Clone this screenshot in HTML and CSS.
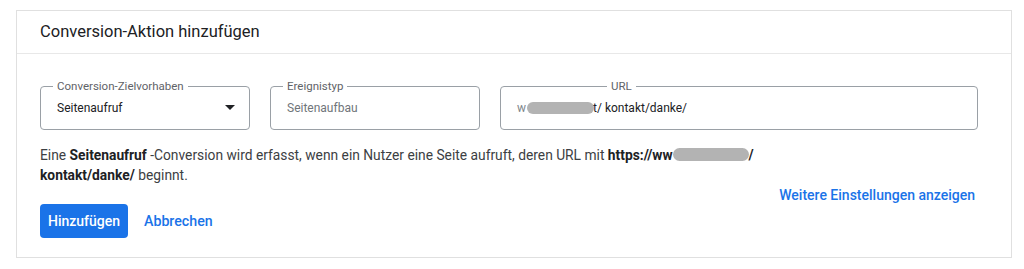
FILE: index.html
```html
<!DOCTYPE html>
<html lang="de">
<head>
<meta charset="utf-8">
<title>Conversion-Aktion hinzufügen</title>
<link rel="stylesheet" href="styles.css">
</head>
<body>
<div class="page">
  <section class="card">
    <header class="card-header">Conversion-Aktion hinzufügen</header>
    <div class="card-body">
      <div class="fields">
        <fieldset class="field field-select">
          <legend class="field-label">Conversion-Zielvorhaben</legend>
          <div class="field-value">
            <span>Seitenaufruf</span>
            <svg class="arrow" width="10" height="5" viewBox="0 0 10 5"><path d="M0 0h10L5 5z" fill="#202124"/></svg>
          </div>
        </fieldset>
        <fieldset class="field field-readonly">
          <legend class="field-label">Ereignistyp</legend>
          <div class="field-value muted">Seitenaufbau</div>
        </fieldset>
        <fieldset class="field field-url">
          <legend class="field-label label-url">URL</legend>
          <div class="field-value"><span class="muted">w</span><span class="blob blob-url"></span><span>t/ kontakt/danke/</span></div>
        </fieldset>
      </div>
      <p class="desc">Eine <b>Seitenaufruf</b> -Conversion wird erfasst, wenn ein Nutzer eine Seite aufruft, deren URL mit <b>https://ww</b><span class="blob blob-desc"></span><b>/</b><br><b>kontakt/danke/</b> beginnt.</p>
      <div class="more-row"><a class="link" href="#">Weitere Einstellungen anzeigen</a></div>
      <div class="actions">
        <button class="btn-primary" type="button">Hinzufügen</button>
        <button class="btn-text" type="button">Abbrechen</button>
      </div>
    </div>
  </section>
</div>
</body>
</html>
```

FILE: styles.css
```css
* { box-sizing: border-box; }
html, body { margin: 0; padding: 0; background: #fff; }
body { font-family: Roboto, "Liberation Sans", Arial, sans-serif; color: #3c4043; }
.page { padding: 10px 12px 0 16px; }
.card {
  width: 996px;
  border: 1px solid #e0e0e0;
  background: #fff;
}
.card-header {
  height: 43px;
  line-height: 42px;
  padding: 0 23px;
  font-size: 16.5px;
  color: #202124;
  border-bottom: 1px solid #e8e8e8;
}
.card-body { padding: 26px 23px 19px 23px; }
.fields { display: flex; gap: 20px; }
.field {
  margin: 0;
  border: 1px solid #9aa0a6;
  border-radius: 4px;
  padding: 6px 16px 11px 16px;
  min-width: 0;
}
.field-select, .field-readonly { width: 210px; }
.field-url { width: 478px; }
.field-label {
  font-size: 11.5px;
  line-height: 12px;
  color: #5f6368;
  padding: 0 4px;
  margin-left: -4px;
}
.label-url { margin-left: 90px; }
.field-value {
  display: flex;
  align-items: center;
  justify-content: space-between;
  font-size: 12px;
  line-height: 20px;
  height: 20px;
  color: #202124;
}
.field-url .field-value { justify-content: flex-start; }
.arrow { margin-right: -2px; margin-top: -2px; }
.muted { color: #80868b; }
.field-readonly .field-value { color: #70757a; }
.blob {
  display: inline-block;
  background: #b3b3b3;
  border-radius: 7px;
  filter: blur(0.6px);
  vertical-align: middle;
}
.blob-url { width: 67px; height: 12px; margin-left: 1px; margin-right: -1px; }
.blob-desc { width: 76px; height: 13px; margin-top: -3px; }
.desc {
  margin: 15px 0 0 0;
  font-size: 13.8px;
  line-height: 20px;
  color: #3c4043;
}
.desc b { color: #202124; font-weight: 700; }
.more-row {
  display: flex;
  justify-content: flex-end;
  padding-right: 13px;
  margin-top: 1px;
  line-height: 18px;
}
.link {
  font-size: 14px;
  font-weight: 500;
  color: #1a73e8;
  text-decoration: none;
}
.actions { display: flex; align-items: center; gap: 16px; }
.btn-primary {
  height: 34px;
  width: 88px;
  padding: 0;
  border: none;
  border-radius: 4px;
  background: #1a73e8;
  color: #fff;
  font-family: Roboto, "Liberation Sans", Arial, sans-serif;
  font-size: 14px;
  font-weight: 500;
}
.btn-text {
  border: none;
  background: none;
  padding: 0;
  color: #1a73e8;
  font-family: Roboto, "Liberation Sans", Arial, sans-serif;
  font-size: 14.2px;
  font-weight: 500;
}
```
